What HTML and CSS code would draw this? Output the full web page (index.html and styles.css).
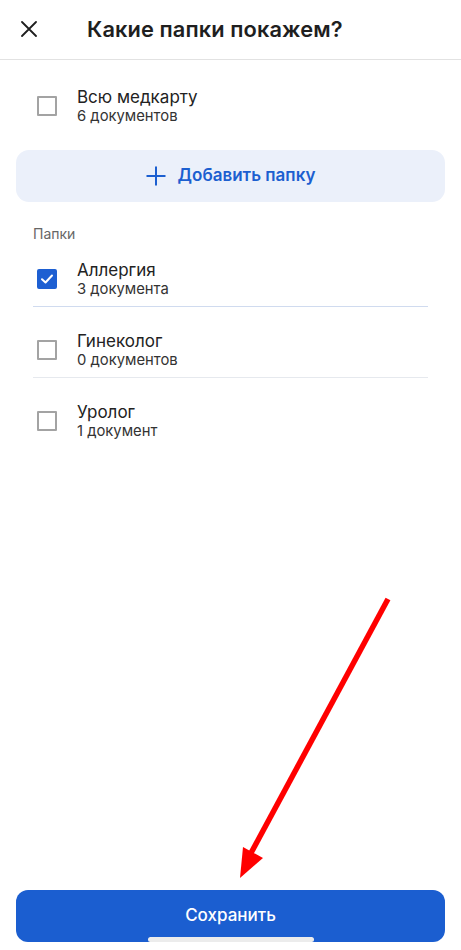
FILE: index.html
```html
<!DOCTYPE html>
<html lang="ru">
<head>
<meta charset="utf-8">
<title>Какие папки покажем?</title>
<link rel="stylesheet" href="styles.css">
</head>
<body>
<div class="screen">
  <header class="header">
    <button class="close" aria-label="Закрыть">
      <svg width="16" height="16" viewBox="0 0 16 16"><path d="M1 1L15 15M15 1L1 15" stroke="#1f1f1f" stroke-width="1.8" stroke-linecap="round"/></svg>
    </button>
    <h1 class="title">Какие папки покажем?</h1>
  </header>

  <main class="content">
    <div class="row all">
      <span class="check"></span>
      <div class="texts">
        <div class="name">Всю медкарту</div>
        <div class="count">6 документов</div>
      </div>
    </div>

    <button class="add">
      <svg width="20" height="20" viewBox="0 0 20 20"><path d="M10 0.5V19.5M0.5 10H19.5" stroke="#1c5fd0" stroke-width="2"/></svg>
      <span>Добавить папку</span>
    </button>

    <div class="label">Папки</div>

    <div class="folders">
      <div class="row checked">
        <span class="check on">
          <svg width="14" height="14" viewBox="0 0 14 14"><path d="M2 7.2L5.5 10.5L12 3.5" fill="none" stroke="#fff" stroke-width="2" stroke-linecap="round" stroke-linejoin="round"/></svg>
        </span>
        <div class="texts">
          <div class="name">Аллергия</div>
          <div class="count">3 документа</div>
        </div>
      </div>
      <div class="row">
        <span class="check"></span>
        <div class="texts">
          <div class="name">Гинеколог</div>
          <div class="count">0 документов</div>
        </div>
      </div>
      <div class="row last">
        <span class="check"></span>
        <div class="texts">
          <div class="name">Уролог</div>
          <div class="count">1 документ</div>
        </div>
      </div>
    </div>
  </main>

  <footer class="footer">
    <button class="save">Сохранить</button>
    <span class="home"></span>
  </footer>

  <svg class="arrow" width="461" height="950" viewBox="0 0 461 950">
    <path d="M388 599L251 853" stroke="#ff0000" stroke-width="5.5" fill="none"/>
    <path d="M240 878L243 847L263 858Z" fill="#ff0000"/>
  </svg>
</div>
</body>
</html>
```

FILE: styles.css
```css
* { box-sizing: border-box; }
html, body { margin: 0; padding: 0; background: #fff; }
body {
  font-family: Inter, "Noto Sans", Roboto, sans-serif;
  color: #1f1f1f;
}
.screen {
  position: relative;
  width: 461px;
  height: 950px;
  display: flex;
  flex-direction: column;
  overflow: hidden;
}
.header {
  height: 60px;
  border-bottom: 1px solid #e2e2e2;
  display: flex;
  align-items: center;
  padding: 0 0 2px 21px;
}
.close {
  width: 16px;
  height: 16px;
  padding: 0;
  border: 0;
  background: none;
  display: flex;
}
.title {
  margin: 0 0 0 50px;
  font-size: 21.8px;
  font-weight: 600;
  letter-spacing: 0.1px;
  color: #1f1f1f;
}
.content {
  flex: 1;
  display: flex;
  flex-direction: column;
}
.row {
  display: flex;
  align-items: center;
  gap: 20px;
  padding: 24px 0 8px 4px;
  border-bottom: 1px solid #e6e9ee;
}
.row.checked { border-bottom-color: #d0dbef; }
.row.last { border-bottom: 0; }
.row.all {
  margin: 0 33px;
  padding-top: 27px;
  border-bottom: 0;
}
.check {
  width: 20px;
  height: 20px;
  border: 2px solid #a3a3a3;
  border-radius: 1px;
  display: flex;
  align-items: center;
  justify-content: center;
  flex: none;
}
.check.on {
  background: #1d5fd2;
  border-color: #1d5fd2;
  border-radius: 2px;
}
.texts { display: flex; flex-direction: column; }
.name {
  font-size: 17px;
  line-height: 20px;
  color: #222;
}
.count {
  font-size: 14.8px;
  line-height: 18px;
  color: #333;
}
.add {
  margin: 17px 16px 0;
  height: 52px;
  border: 0;
  border-radius: 13px;
  background: #ebf0fa;
  display: flex;
  align-items: center;
  justify-content: center;
  gap: 12px;
  font-family: inherit;
  font-size: 17px;
  font-weight: 600;
  color: #1c5fd0;
  padding: 0 0 2px;
}
.add svg { margin-top: 2px; }
.label {
  margin: 23px 33px 0;
  font-size: 14px;
  line-height: 18px;
  color: #666;
}
.folders {
  margin: 0 33px;
  width: 395px;
}
.folders .row:first-child { padding-top: 17px; }
.footer {
  position: relative;
  padding: 0 16px 8px;
}
.save {
  width: 100%;
  height: 52px;
  border: 0;
  border-radius: 12px;
  background: #1b5ed0;
  color: #fff;
  font-family: inherit;
  font-size: 17px;
  font-weight: 500;
  padding: 0 0 2px;
}
.home {
  position: absolute;
  left: 148px;
  bottom: 8px;
  width: 166px;
  height: 5px;
  border-radius: 3px;
  background: #ececec;
}
.arrow {
  position: absolute;
  left: 0;
  top: 0;
  pointer-events: none;
}
```
